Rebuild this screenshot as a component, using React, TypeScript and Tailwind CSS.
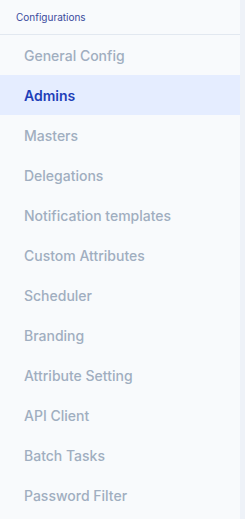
const items = [
  'General Config',
  'Admins',
  'Masters',
  'Delegations',
  'Notification templates',
  'Custom Attributes',
  'Scheduler',
  'Branding',
  'Attribute Setting',
  'API Client',
  'Batch Tasks',
  'Password Filter',
];

export default function App() {
  const active = 'Admins';
  return (
    <div className="flex h-[519px] w-[245px] bg-[#eef2f8] font-['Inter',sans-serif]">
      <aside className="flex w-[240px] flex-col bg-[#f8fafc]">
        <div className="flex h-[35px] items-center border-b border-[#e2e8f0] pt-px pl-4 text-[10px] text-[#3a4a9c]">
          Configurations
        </div>
        <nav className="flex flex-col">
          {items.map((item) => (
            <div
              key={item}
              className={
                item === active
                  ? 'flex h-10 items-center bg-[#e5edff] pl-6 pt-px text-sm font-semibold text-[#1e3fb8]'
                  : 'flex h-10 items-center pl-6 pt-px text-sm font-medium text-[#a0aec0]'
              }
            >
              {item}
            </div>
          ))}
        </nav>
      </aside>
    </div>
  );
}
